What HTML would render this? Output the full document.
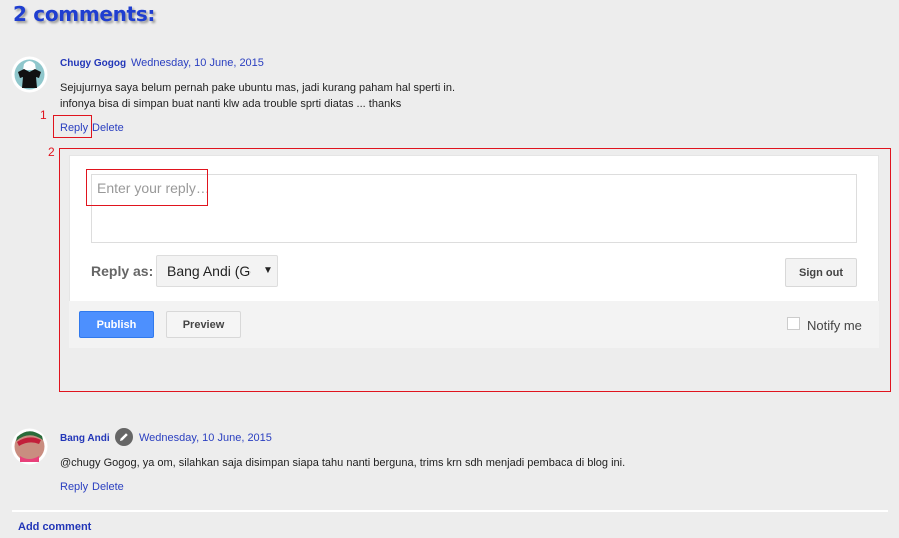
<!DOCTYPE html>
<html><head><meta charset="utf-8"><style>
*{margin:0;padding:0;box-sizing:border-box}
body{width:899px;height:538px;background:#ededed;position:relative;overflow:hidden;font-family:"Liberation Sans",sans-serif}
.a{position:absolute;white-space:nowrap}
.t{font-size:11px;color:#222}
.b{color:#2a3fc0}
.n{font-weight:bold;font-size:10px;color:#2236b8}
.red{border:1px solid #e0141e;position:absolute}
.rn{color:#e0141e;font-size:12px;position:absolute}
</style></head><body>
<div class="a" style="left:13px;top:2px;font-family:'DejaVu Sans',sans-serif;font-weight:bold;font-size:20px;color:#1f3ed0;text-shadow:2px 2px 2px rgba(0,0,0,.35);letter-spacing:-0.3px">2 comments:</div>

<svg class="a" style="left:11px;top:56px" width="37" height="37"><circle cx="18.5" cy="18.5" r="18" fill="#fff"/><circle cx="18.5" cy="18.5" r="15" fill="#8fc7cc"/><path d="M13 8 Q18.5 2 24 8 L25 14 L12 14Z" fill="#fff"/><path d="M7 16 L13 13 L18.5 16 L24 13 L30 16 L28 22 L25 21 L26 32 L11 32 L12 21 L9 22Z" fill="#111"/></svg>
<div class="a n" style="left:60px;top:58px">Chugy Gogog</div>
<div class="a t b" style="left:131px;top:57px">Wednesday, 10 June, 2015</div>
<div class="a t" style="left:60px;top:82px">Sejujurnya saya belum pernah pake ubuntu mas, jadi kurang paham hal sperti in.</div>
<div class="a t" style="left:60px;top:98px">infonya bisa di simpan buat nanti klw ada trouble sprti diatas ... thanks</div>
<div class="rn" style="left:40px;top:108px">1</div>
<div class="red" style="left:53px;top:115px;width:39px;height:23px"></div>
<div class="a t b" style="left:60px;top:122px">Reply</div>
<div class="a t b" style="left:92px;top:122px">Delete</div>

<div class="rn" style="left:48px;top:145px">2</div>
<div class="red" style="left:59px;top:148px;width:832px;height:244px"></div>
<div class="a" style="left:69px;top:155px;width:810px;height:193px;background:#fff;border:1px solid #e5e5e5"></div>
<div class="a" style="left:69px;top:301px;width:810px;height:47px;background:#f3f3f3"></div>
<div class="a" style="left:91px;top:174px;width:766px;height:69px;border:1px solid #ddd;background:#fff"></div>
<div class="a" style="left:97px;top:180px;font-size:14px;color:#999">Enter your reply…</div>
<div class="red" style="left:86px;top:169px;width:122px;height:37px"></div>
<div class="a" style="left:91px;top:263px;font-size:14px;font-weight:bold;color:#666">Reply as:</div>
<div class="a" style="left:156px;top:255px;width:122px;height:32px;background:#f3f3f3;border:1px solid #ddd;border-radius:2px"></div>
<div class="a" style="left:167px;top:263px;width:84px;overflow:hidden;font-size:14px;color:#222">Bang Andi (Go</div>
<div class="a" style="left:263px;top:265px;font-size:10px;color:#222">▼</div>
<div class="a" style="left:785px;top:258px;width:72px;height:29px;background:#f3f3f3;border:1px solid #d8d8d8;border-radius:2px;font-size:11px;font-weight:bold;color:#444;text-align:center;line-height:28px">Sign out</div>
<div class="a" style="left:79px;top:311px;width:75px;height:27px;background:#4d90fe;border:1px solid #3079ed;border-radius:2px;font-size:11px;font-weight:bold;color:#fff;text-align:center;line-height:27px">Publish</div>
<div class="a" style="left:166px;top:311px;width:75px;height:27px;background:#f5f5f5;border:1px solid #d8d8d8;border-radius:2px;font-size:11px;font-weight:bold;color:#444;text-align:center;line-height:27px">Preview</div>
<div class="a" style="left:787px;top:317px;width:13px;height:13px;background:#fff;border:1px solid #ccc"></div>
<div class="a" style="left:807px;top:318px;font-size:13px;color:#444">Notify me</div>

<svg class="a" style="left:11px;top:428px" width="37" height="37"><circle cx="18.5" cy="18.5" r="18" fill="#fff"/><circle cx="18.5" cy="18.5" r="15" fill="#c98d80"/><path d="M5 13 Q18 2 32 12 L31 8 Q18 -2 6 9Z" fill="#2a6b3a"/><path d="M6 14 Q18 6 30 12 L28 16 Q18 12 8 18Z" fill="#c21e3a"/><path d="M9 28 Q18 34 28 28 L28 34 L9 34Z" fill="#e8407a"/></svg>
<div class="a n" style="left:60px;top:433px">Bang Andi</div>
<svg class="a" style="left:115px;top:428px" width="18" height="18"><circle cx="9" cy="9" r="9" fill="#666"/><path d="M5 13 L5.6 10.6 L11 5.2 L12.8 7 L7.4 12.4Z" fill="#fff"/></svg>
<div class="a t b" style="left:139px;top:432px">Wednesday, 10 June, 2015</div>
<div class="a t" style="left:60px;top:457px">@chugy Gogog, ya om, silahkan saja disimpan siapa tahu nanti berguna, trims krn sdh menjadi pembaca di blog ini.</div>
<div class="a t b" style="left:60px;top:481px">Reply</div>
<div class="a t b" style="left:92px;top:481px">Delete</div>
<div class="a" style="left:12px;top:510px;width:876px;height:2px;background:#fff"></div>
<div class="a n" style="left:18px;top:521px;font-size:11px">Add comment</div>
</body></html>
